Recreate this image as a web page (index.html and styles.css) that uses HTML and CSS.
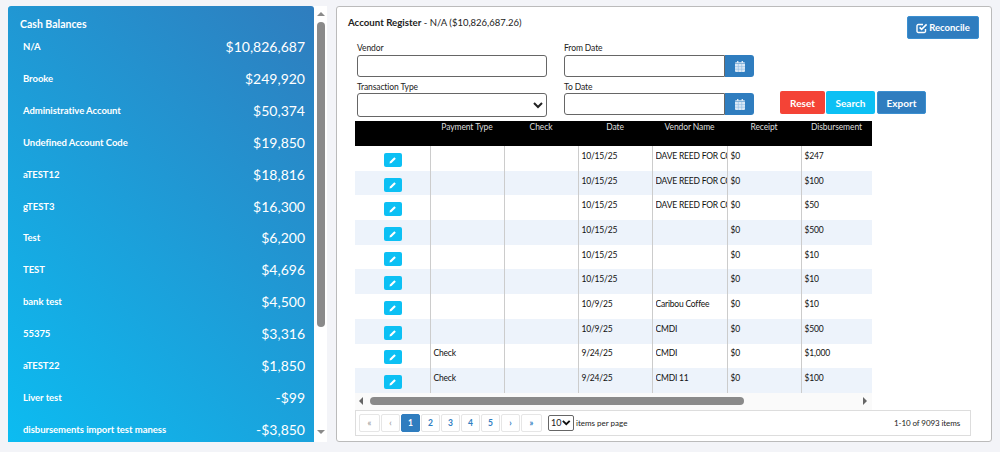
FILE: index.html
```html
<!DOCTYPE html>
<html>
<head>
  <meta charset="utf-8">
  <title>Account Register</title>
  <link rel="stylesheet" href="styles.css">
</head>
<body>
  <div class="page">
    <div class="side">
      <div class="balances">
        <h4>Cash Balances</h4>
        <div class="bal"><span>N/A</span><b>$10,826,687</b></div>
        <div class="bal"><span>Brooke</span><b>$249,920</b></div>
        <div class="bal"><span>Administrative Account</span><b>$50,374</b></div>
        <div class="bal"><span>Undefined Account Code</span><b>$19,850</b></div>
        <div class="bal"><span>aTEST12</span><b>$18,816</b></div>
        <div class="bal"><span>gTEST3</span><b>$16,300</b></div>
        <div class="bal"><span>Test</span><b>$6,200</b></div>
        <div class="bal"><span>TEST</span><b>$4,696</b></div>
        <div class="bal"><span>bank test</span><b>$4,500</b></div>
        <div class="bal"><span>55375</span><b>$3,316</b></div>
        <div class="bal"><span>aTEST22</span><b>$1,850</b></div>
        <div class="bal"><span>Liver test</span><b>-$99</b></div>
        <div class="bal"><span>disbursements import test maness</span><b>-$3,850</b></div>
      </div>
      <div class="vscroll">
        <i class="arrow up"></i>
        <div class="vthumb"></div>
        <i class="arrow down"></i>
      </div>
    </div>

    <div class="card">
      <div class="card-head">
        <div class="card-title"><strong>Account Register</strong> - N/A ($10,826,687.26)</div>
        <button class="btn blue reconcile">
          <svg width="12" height="12" viewBox="0 0 12 12"><path d="M9.5 7v2.200a1.300 1.300 0 0 1-1.300 1.300H2.300A1.300 1.300 0 0 1 1 9.200V3.800a1.300 1.300 0 0 1 1.300-1.300H7" fill="none" stroke="#fff" stroke-width="1.400"/><path d="M3.600 5.400l2 2 5-5" fill="none" stroke="#fff" stroke-width="1.600"/></svg>
          Reconcile
        </button>
      </div>

      <div class="filters">
        <div class="field">
          <label>Vendor</label>
          <input class="txt" type="text">
        </div>
        <div class="field">
          <label>From Date</label>
          <div class="date">
            <input class="txt" type="text">
            <span class="cal"><svg width="10" height="11" viewBox="0 0 10 11"><path d="M0 3h10v7a1 1 0 0 1-1 1H1a1 1 0 0 1-1-1zM0 2.400V2.200a1 1 0 0 1 1-1h1V0h1.400v1.200h3.200V0H8v1.200h1a1 1 0 0 1 1 1v.2z" fill="#dbe9f6"/><path d="M3.300 3v8M6.700 3v8M0 5.600h10M0 8.200h10" stroke="#8fbce3" stroke-width=".6"/></svg></span>
          </div>
        </div>
        <div class="field">
          <label>Transaction Type</label>
          <div class="select">
            <svg width="10" height="7" viewBox="0 0 10 7"><path d="M1 1l4 4 4-4" fill="none" stroke="#222" stroke-width="2"/></svg>
          </div>
        </div>
        <div class="field">
          <label>To Date</label>
          <div class="date">
            <input class="txt" type="text">
            <span class="cal"><svg width="10" height="11" viewBox="0 0 10 11"><path d="M0 3h10v7a1 1 0 0 1-1 1H1a1 1 0 0 1-1-1zM0 2.400V2.200a1 1 0 0 1 1-1h1V0h1.400v1.200h3.200V0H8v1.200h1a1 1 0 0 1 1 1v.2z" fill="#dbe9f6"/><path d="M3.300 3v8M6.700 3v8M0 5.600h10M0 8.200h10" stroke="#8fbce3" stroke-width=".6"/></svg></span>
          </div>
        </div>
        <div class="actions">
          <button class="btn red">Reset</button>
          <button class="btn cyan">Search</button>
          <button class="btn blue">Export</button>
        </div>
      </div>

      <div class="grid">
        <table>
          <thead>
            <tr><th></th><th>Payment Type</th><th>Check</th><th>Date</th><th>Vendor Name</th><th>Receipt</th><th>Disbursement</th></tr>
          </thead>
          <tbody id="rows"></tbody>
        </table>
        <div class="hscroll">
          <i class="arrow left"></i>
          <div class="hthumb"></div>
          <i class="arrow right"></i>
        </div>
      </div>

      <div class="pager">
        <div class="pages">
          <a class="off wide">«</a><a class="off">‹</a><a class="on">1</a><a>2</a><a>3</a><a>4</a><a>5</a><a>›</a><a class="wide">»</a>
        </div>
        <div class="per">
          <span class="size">10<svg width="9" height="6" viewBox="0 0 10 7"><path d="M1 1l4 4 4-4" fill="none" stroke="#111" stroke-width="2.200"/></svg></span>
          items per page
        </div>
        <div class="count">1-10 of 9093 items</div>
      </div>
    </div>
  </div>

  <script>
    var data = [
      ['', '10/15/25', 'DAVE REED FOR CONGRESS', '$247'],
      ['', '10/15/25', 'DAVE REED FOR CONGRESS', '$100'],
      ['', '10/15/25', 'DAVE REED FOR CONGRESS', '$50'],
      ['', '10/15/25', '', '$500'],
      ['', '10/15/25', '', '$10'],
      ['', '10/15/25', '', '$10'],
      ['', '10/9/25', 'Caribou Coffee', '$10'],
      ['', '10/9/25', 'CMDI', '$500'],
      ['Check', '9/24/25', 'CMDI', '$1,000'],
      ['Check', '9/24/25', 'CMDI 11', '$100']
    ];
    var pencil = '<span class="edit"><svg width="8" height="8" viewBox="0 0 8 8"><path d="M.5 7.500l.5-2 4.300-4.300 1.500 1.500L2.500 7z" fill="#fff"/></svg></span>';
    var html = '';
    for (var i = 0; i < data.length; i++) {
      var r = data[i];
      html += '<tr><td class="c">' + pencil + '</td><td>' + r[0] + '</td><td></td><td>' + r[1] + '</td><td><div class="clip">' + r[2] + '</div></td><td>$0</td><td>' + r[3] + '</td></tr>';
    }
    document.getElementById('rows').innerHTML = html;
  </script>
</body>
</html>
```

FILE: styles.css
```css
* {
  box-sizing: border-box;
}

body {
  margin: 0;
  background: #f3f4f8;
  font-family: Lato, "Open Sans", sans-serif;
  color: #222;
  height: 452px;
  overflow: hidden;
}

.page {
  display: flex;
  padding: 6px 8px 10px;
  height: 452px;
}

.side {
  display: flex;
  width: 319px;
  height: 436px;
  background: #fff;
}

.balances {
  width: 306px;
  height: 436px;
  overflow: hidden;
  padding: 11px 9px 0 12px;
  color: #fff;
  border-radius: 3px 3px 0 0;
  background: linear-gradient(45deg, #0cbcf1, #2f7dbe);
}

.balances h4 {
  margin: 0;
  font-size: 10.500px;
  font-weight: 700;
  line-height: 14px;
}

.bal {
  display: flex;
  justify-content: space-between;
  align-items: center;
  height: 31.850px;
  padding-left: 3px;
}

.bal span {
  font-size: 9.500px;
  font-weight: 700;
  letter-spacing: -0.05px;
}

.bal b {
  font-size: 14px;
  font-weight: 400;
}

.vscroll {
  width: 13px;
  display: flex;
  flex-direction: column;
  align-items: center;
  padding: 6px 0 8px;
}

.vthumb {
  width: 8px;
  height: 305px;
  margin-top: 6px;
  background: #8a8a8a;
  border-radius: 4px;
}

.arrow {
  display: block;
  width: 0;
  height: 0;
  border: 4px solid transparent;
}

.arrow.up {
  border-top: 0;
  border-bottom: 4px solid #8a8a8a;
}

.arrow.down {
  margin-top: auto;
  border-bottom: 0;
  border-top: 4px solid #8a8a8a;
}

.arrow.left {
  border-left: 0;
  border-right: 4px solid #666;
}

.arrow.right {
  border-right: 0;
  border-left: 4px solid #666;
}

.card {
  width: 656px;
  height: 436px;
  margin-left: 9px;
  padding: 9px 12px 0 11px;
  background: #fff;
  border: 1px solid #bbb;
  border-radius: 3px;
}

.card-head {
  display: flex;
  justify-content: space-between;
  align-items: flex-start;
  height: 24px;
}

.card-title {
  font-size: 9.500px;
  line-height: 12px;
}

.card-title strong {
  font-size: 9.700px;
  font-weight: 700;
}

.btn {
  height: 23px;
  border: 1px solid transparent;
  border-radius: 2px;
  padding: 0;
  color: #fff;
  font-family: inherit;
  font-size: 10px;
  font-weight: 700;
}

.blue {
  background: #2f7dbf;
  border-color: #3b8fd0;
}

.red {
  width: 45px;
  background: #f44336;
}

.cyan {
  width: 49px;
  background: #0cc0f4;
}

.reconcile {
  width: 72px;
  display: flex;
  align-items: center;
  justify-content: center;
  gap: 1px;
  font-size: 9.500px;
}

.filters {
  display: grid;
  grid-template-columns: 190px 190px auto;
  grid-template-rows: 38px 38px;
  column-gap: 17px;
  margin: 3px 0 0 9px;
}

.field:nth-child(odd) {
  grid-column: 1;
}

.field:nth-child(even) {
  grid-column: 2;
}

.field label {
  display: block;
  font-size: 8.500px;
  line-height: 11px;
  margin-bottom: 1px;
  letter-spacing: -0.1px;
}

.field:nth-child(n+3) label {
  margin-top: 1px;
  margin-bottom: 0;
}

.txt,
.select {
  display: block;
  width: 100%;
  height: 22px;
  padding: 0;
  background: #fff;
  border: 1px solid #666;
  border-radius: 3px;
}

.select {
  height: 24px;
  display: flex;
  align-items: center;
  justify-content: flex-end;
  padding-right: 3px;
}

.date {
  display: flex;
}

.date .txt {
  flex: 1;
  min-width: 0;
  border-radius: 3px 0 0 3px;
}

.cal {
  width: 29px;
  height: 22px;
  display: flex;
  align-items: center;
  justify-content: center;
  background: #2f7dbf;
  border-radius: 0 3px 3px 0;
}

.actions {
  grid-column: 3;
  grid-row: 2;
  display: flex;
  gap: 1px;
  margin: 10px 0 0 9px;
}

.actions .blue {
  width: 49px;
  margin-left: 1px;
}

.grid {
  width: 517px;
  margin-left: 7px;
}

table {
  width: 517px;
  margin-top: 2px;
  table-layout: fixed;
  border-collapse: collapse;
  font-size: 8.500px;
}

th {
  height: 25px;
  padding: 1px 0 0;
  background: #000;
  color: #ddd;
  font-weight: 400;
  letter-spacing: -0.1px;
  text-align: center;
  vertical-align: top;
}

th:nth-child(1) { width: 75px; }
th:nth-child(2) { width: 74px; }
th:nth-child(3) { width: 74px; }
th:nth-child(4) { width: 74px; }
th:nth-child(5) { width: 75px; }
th:nth-child(6) { width: 74px; }

td {
  height: 24.700px;
  padding: 0 0 5px 3px;
  border-left: 1px solid #ccc;
  color: #111;
  white-space: nowrap;
  overflow: hidden;
  letter-spacing: -0.2px;
}

td:first-child {
  border-left: 0;
}

tr:nth-child(even) td {
  background: #edf3fb;
}

.c {
  text-align: center;
  padding: 3px 0 0 2px;
}

.clip {
  overflow: hidden;
  width: 72px;
}

.edit {
  display: inline-flex;
  align-items: center;
  justify-content: center;
  width: 18px;
  height: 14px;
  background: #0cc0f4;
  border-radius: 2px;
}

.hscroll {
  display: flex;
  align-items: center;
  height: 17px;
  padding: 0 4px;
  background: #fafafa;
}

.hthumb {
  width: 374px;
  height: 8px;
  margin-left: 7px;
  background: #8a8a8a;
  border-radius: 4px;
}

.hscroll .right {
  margin-left: auto;
  margin-right: 1px;
}

.pager {
  display: flex;
  align-items: center;
  width: 616px;
  height: 26px;
  margin-left: 7px;
  padding: 0 10px 0 3px;
  border: 1px solid #ddd;
  font-size: 8px;
}

.pages {
  display: flex;
  gap: 1px;
}

.pages a {
  display: flex;
  align-items: center;
  justify-content: center;
  width: 19px;
  height: 18px;
  border: 1px solid #e6e6e6;
  border-radius: 2px;
  color: #2f7dbf;
  font-size: 8.500px;
  font-weight: 700;
}

.pages a.wide {
  width: 21px;
}

.pages a.off {
  color: #aaa;
}

.pages a.on {
  background: #2f7dbf;
  border-color: #2f7dbf;
  color: #fff;
}

.per {
  display: flex;
  align-items: center;
  gap: 2px;
  margin-left: 6px;
}

.size {
  display: flex;
  align-items: center;
  gap: 1px;
  width: 26px;
  height: 16px;
  padding: 0 2px;
  border: 1px solid #666;
  border-radius: 2px;
  font-size: 9px;
}

.count {
  margin-left: auto;
  letter-spacing: -0.1px;
}
```
